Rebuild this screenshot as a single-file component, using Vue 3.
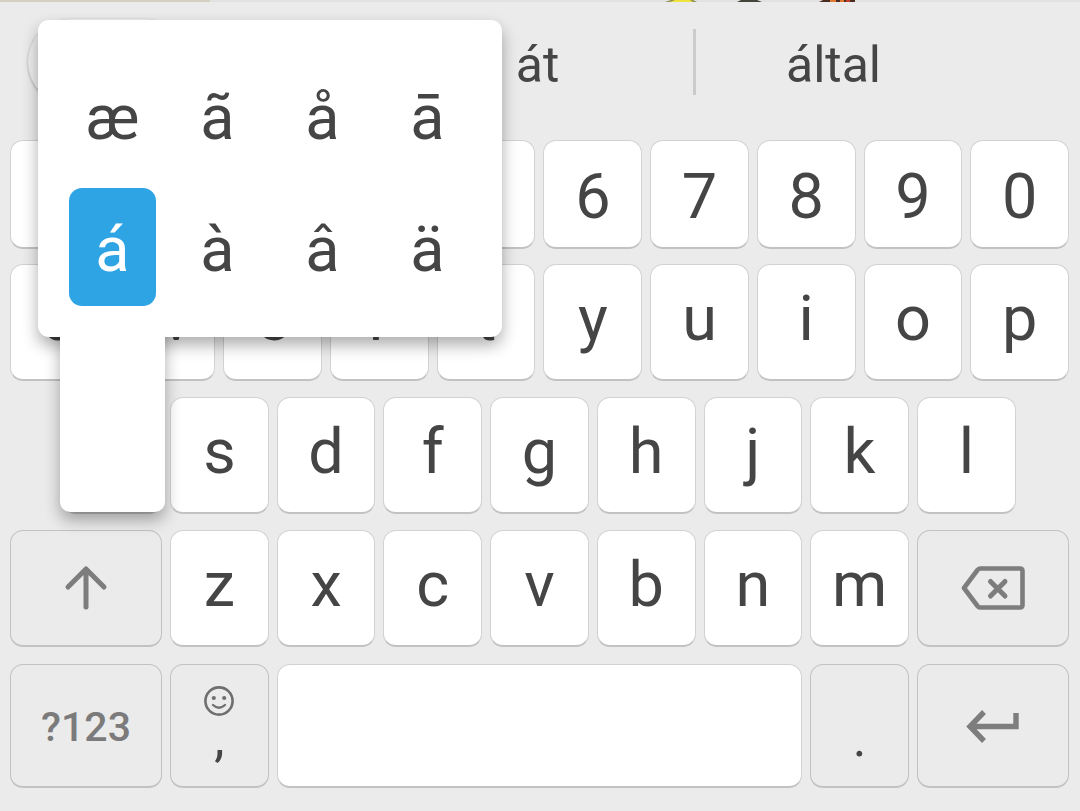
<script setup>
const numbers = ['1', '2', '3', '4', '5', '6', '7', '8', '9', '0']
const topLetters = ['q', 'w', 'e', 'r', 't', 'y', 'u', 'i', 'o', 'p']
const homeLetters = ['a', 's', 'd', 'f', 'g', 'h', 'j', 'k', 'l']
const lowerLetters = ['z', 'x', 'c', 'v', 'b', 'n', 'm']
const variants = ['æ', 'ã', 'å', 'ā', 'á', 'à', 'â', 'ä']
const selected = 'á'
</script>

<template>
  <main class="keyboard">
    <svg class="content-edge" viewBox="0 0 1080 2" preserveAspectRatio="none" aria-hidden="true">
      <rect width="1080" height="2" fill="#e2e2e2" />
      <rect width="210" height="2" fill="#d3d0c2" />
      <path d="M665 2L671 0H693L697 2Z" fill="#8d8f50" />
      <path d="M670 2L675 0H690L693 2Z" fill="#eee23d" />
      <path d="M737 2L741 0H757L762 2Z" fill="#44453a" />
      <path d="M819 2L823 0H855V2Z" fill="#4a2c20" />
      <path d="M830 0h6v2h-6zM840 0h4v2h-4z" fill="#e0782f" />
      <path d="M846 0h4v2h-4z" fill="#c33d2a" />
    </svg>

    <div class="suggestions">
      <div class="slot first"><button class="pill" aria-label="Menu"></button></div>
      <button class="slot word divided">át</button>
      <button class="slot word">által</button>
    </div>

    <div class="rows">
      <div class="row digits">
        <button v-for="k in numbers" :key="k" class="key">{{ k }}</button>
      </div>
      <div class="row">
        <button v-for="k in topLetters" :key="k" class="key">{{ k }}</button>
      </div>
      <div class="row home">
        <button v-for="k in homeLetters" :key="k" class="key">{{ k }}</button>
      </div>
      <div class="row">
        <button class="key wide func" aria-label="Shift">
          <svg width="44" height="46" viewBox="0 0 44 46">
            <path d="M22 42V4M4 22L22 4L40 22" fill="none" stroke="#7d7d7d" stroke-width="5" stroke-linecap="round" stroke-linejoin="round" />
          </svg>
        </button>
        <button v-for="k in lowerLetters" :key="k" class="key">{{ k }}</button>
        <button class="key wide func" aria-label="Backspace">
          <svg width="64" height="44" viewBox="0 0 64 44">
            <path d="M19 2.5H59Q61.5 2.5 61.5 5V39Q61.5 41.5 59 41.5H19Q17.5 41.5 16.5 40L3 22L16.5 4Q17.5 2.5 19 2.5Z" fill="none" stroke="#7d7d7d" stroke-width="4.6" stroke-linejoin="round" />
            <path d="M29.5 15.5L44 30M44 15.5L29.5 30" fill="none" stroke="#7d7d7d" stroke-width="5" stroke-linecap="round" />
          </svg>
        </button>
      </div>
      <div class="row bottom">
        <button class="key wide func symbols">?123</button>
        <button class="key func comma">
          <svg width="30" height="30" viewBox="0 0 30 30" aria-hidden="true">
            <circle cx="15" cy="15" r="13.6" fill="none" stroke="#6f6f6f" stroke-width="2.6" />
            <circle cx="9.8" cy="12" r="2.1" fill="#6f6f6f" />
            <circle cx="20.2" cy="12" r="2.1" fill="#6f6f6f" />
            <path d="M9 19Q15 24.5 21 19" fill="none" stroke="#6f6f6f" stroke-width="2.3" stroke-linecap="round" />
          </svg>
          <span>,</span>
        </button>
        <button class="key space" aria-label="Space"></button>
        <button class="key func period"><span>.</span></button>
        <button class="key wide func" aria-label="Enter">
          <svg width="54" height="34" viewBox="0 0 54 34">
            <path d="M50 3V16.5H5M18 2L4 16.5L18 31" fill="none" stroke="#7d7d7d" stroke-width="5.4" />
          </svg>
        </button>
      </div>
    </div>

    <div class="stem"></div>
    <div class="popup">
      <button v-for="v in variants" :key="v" class="variant" :class="{ active: v === selected }">{{ v }}</button>
    </div>
  </main>
</template>

<style>
body {
  background: #ebebeb;
}
</style>

<style scoped>
.keyboard {
  position: relative;
  min-height: 100vh;
  background: #ebebeb;
  color: #454545;
  font-family: Roboto, "Liberation Sans", sans-serif;
}
button {
  margin: 0;
  padding: 0;
  border: 0;
  background: none;
  color: inherit;
  font: inherit;
}
svg {
  display: block;
}
.content-edge {
  position: absolute;
  top: 0;
  left: 0;
  width: 100%;
  height: 2px;
}
.suggestions {
  display: grid;
  grid-template-columns: 382fr 314fr 275fr 109fr;
  align-items: center;
  height: 124px;
  margin-bottom: 16px;
}
.first {
  padding-left: 28px;
}
.pill {
  display: block;
  width: 160px;
  height: 86px;
  border-radius: 43px;
  background: #ededed;
  box-shadow: 0 1px 3px rgba(0, 0, 0, 0.3);
}
.word {
  height: 66px;
  font-size: 50px;
  line-height: 58px;
  padding-top: 6px;
}
.divided {
  border-right: 3px solid #cbcbcb;
}
.rows {
  display: flex;
  flex-direction: column;
  gap: 16px;
  padding: 0 11px 22px 10px;
}
.row {
  display: grid;
  grid-template-columns: repeat(20, minmax(0, 1fr));
  column-gap: 8px;
  height: 117px;
}
.digits {
  height: 109px;
  margin-bottom: -1px;
}
.bottom {
  height: 124px;
  margin-top: 1px;
}
.key {
  grid-column: span 2;
  display: flex;
  align-items: center;
  justify-content: center;
  padding-bottom: 6px;
  border: 1px solid #d2d2d2;
  border-bottom: 2px solid #c2c2c2;
  border-radius: 13px;
  background: #fff;
  font-size: 63px;
  line-height: 76px;
}
.digits .key {
  padding: 6px 0 0;
}
.home .key:first-child {
  grid-column: 2 / span 2;
}
.wide {
  grid-column: span 3;
}
.func {
  border-color: #c2c2c2;
  background: #ebebeb;
  padding: 0;
}
.space {
  grid-column: span 10;
}
.bottom .wide {
  padding: 2px 0 0;
}
.symbols {
  color: #7b7b7b;
  font-size: 41px;
  font-weight: 500;
}
.comma,
.period {
  flex-direction: column;
  justify-content: flex-end;
  padding-bottom: 21px;
  font-size: 52px;
  line-height: 52px;
}
.comma svg {
  margin-bottom: -3px;
}
.stem,
.popup {
  position: absolute;
  background: #fff;
  box-shadow: 0 8px 16px rgba(0, 0, 0, 0.32);
}
.stem {
  top: 300px;
  left: 60px;
  width: 105px;
  height: 212px;
  border-radius: 10px;
}
.popup {
  top: 20px;
  left: 38px;
  display: grid;
  grid-template-columns: repeat(4, 87px);
  grid-auto-rows: 118px;
  gap: 14px 18px;
  padding: 36px 31px 31px;
  border-radius: 11px;
}
/* Covers the popup's shadow where the stem joins it. */
.popup::after {
  content: "";
  position: absolute;
  top: 300px;
  left: 22px;
  width: 105px;
  height: 60px;
  background: #fff;
}
.variant {
  position: relative;
  z-index: 1;
  padding-top: 5px;
  border-radius: 13px;
  font-size: 63px;
  line-height: 76px;
}
.active {
  background: #2fa4e4;
  color: #fff;
}
</style>
